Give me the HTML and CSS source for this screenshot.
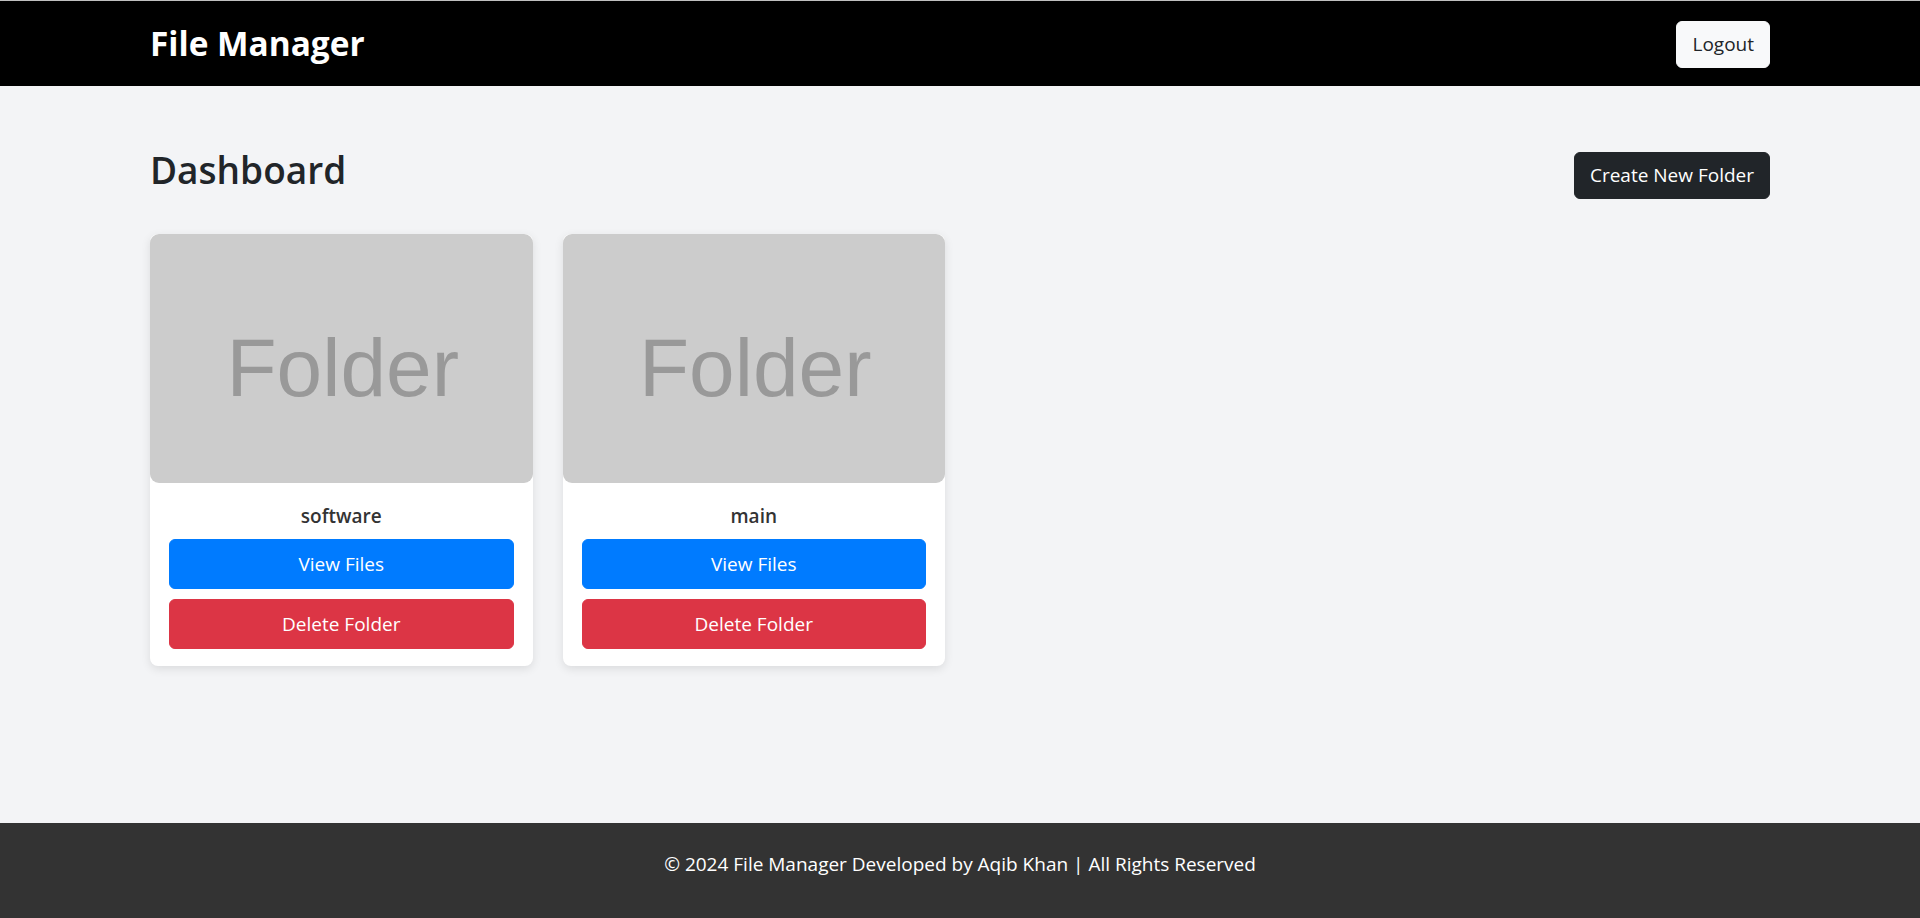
FILE: index.html
```html
<!DOCTYPE html>
<html lang="en">
<head>
<meta charset="utf-8">
<title>File Manager</title>
<link rel="stylesheet" href="styles.css">
</head>
<body>
<nav class="navbar">
  <div class="container nav-inner">
    <a class="brand" href="#">File Manager</a>
    <button class="btn btn-light">Logout</button>
  </div>
</nav>
<main class="main">
  <div class="container">
    <div class="head-row">
      <h2 class="title">Dashboard</h2>
      <button class="btn btn-dark">Create New Folder</button>
    </div>
    <div class="grid">
      <div class="card">
        <div class="thumb"><span class="thumb-text">Folder</span></div>
        <div class="card-body">
          <h5 class="card-title">software</h5>
          <button class="btn btn-block btn-primary">View Files</button>
          <button class="btn btn-block btn-danger">Delete Folder</button>
        </div>
      </div>
      <div class="card">
        <div class="thumb"><span class="thumb-text">Folder</span></div>
        <div class="card-body">
          <h5 class="card-title">main</h5>
          <button class="btn btn-block btn-primary">View Files</button>
          <button class="btn btn-block btn-danger">Delete Folder</button>
        </div>
      </div>
    </div>
  </div>
</main>
<footer class="footer">
  <p class="footer-text">© 2024 File Manager Developed by Aqib Khan | All Rights Reserved</p>
</footer>
</body>
</html>
```
FILE: styles.css
```css
* { box-sizing: border-box; }
html, body { margin: 0; padding: 0; }
body {
  font-family: "Open Sans", "Noto Sans", sans-serif;
  font-size: 19px;
  color: #212529;
  background: #f3f4f6;
  min-height: 100vh;
  display: flex;
  flex-direction: column;
}
.container {
  width: 1620px;
  margin: 0 auto;
}
.navbar {
  background: #000;
  border-top: 1px solid #bfbfbf;
  height: 86px;
}
.nav-inner {
  height: 100%;
  display: flex;
  align-items: center;
  justify-content: space-between;
}
.brand {
  color: #fff;
  font-weight: 700;
  font-size: 33.4px;
  text-decoration: none;
  margin-top: -1px;
}
.btn {
  font-family: inherit;
  font-size: 19px;
  height: 47px;
  padding: 0 15px;
  border: 1px solid transparent;
  border-radius: 6px;
  cursor: pointer;
  line-height: 1;
}
.btn-light { background: #f8f9fa; color: #212529; border-color: #f8f9fa; margin-top: 1px; }
.btn-dark { background: #212529; color: #fff; border-color: #212529; }
.btn-primary { background: #007bff; color: #fff; border-color: #007bff; }
.btn-danger { background: #dc3545; color: #fff; border-color: #dc3545; }
.btn-block { display: block; width: 100%; height: 50px; }
.main {
  flex: 1;
  padding-top: 60px;
}
.head-row {
  display: flex;
  align-items: center;
  justify-content: space-between;
  margin-bottom: 30px;
}
.title {
  font-size: 37px;
  font-weight: 600;
  line-height: 48px;
  margin: 0 0 10px 0;
}
.grid {
  display: grid;
  grid-template-columns: repeat(4, 1fr);
  column-gap: 30px;
  align-items: start;
}
.card {
  background: #fff;
  border-radius: 8px;
  box-shadow: 0 3px 10px rgba(0, 0, 0, 0.1);
}
.thumb {
  height: 249px;
  background: #cccccc;
  border-radius: 9px;
  display: flex;
  align-items: center;
  justify-content: center;
  padding-top: 19px;
  padding-left: 3px;
}
.thumb-text {
  font-family: "Liberation Sans", Arial, sans-serif;
  font-size: 82px;
  line-height: 1;
  color: #999;
  filter: blur(0.5px);
}
.card-body {
  padding: 19px 19px 17px;
}
.card-title {
  font-size: 19px;
  font-weight: 600;
  color: #333;
  text-align: center;
  line-height: 29px;
  margin: 0 0 8px 0;
}
.btn-block + .btn-block { margin-top: 10px; }
.footer {
  background: #333;
  color: #fff;
  height: 95px;
  padding-top: 26px;
  text-align: center;
}
.footer-text {
  margin: 0;
  font-size: 19px;
  line-height: 30px;
}
```
